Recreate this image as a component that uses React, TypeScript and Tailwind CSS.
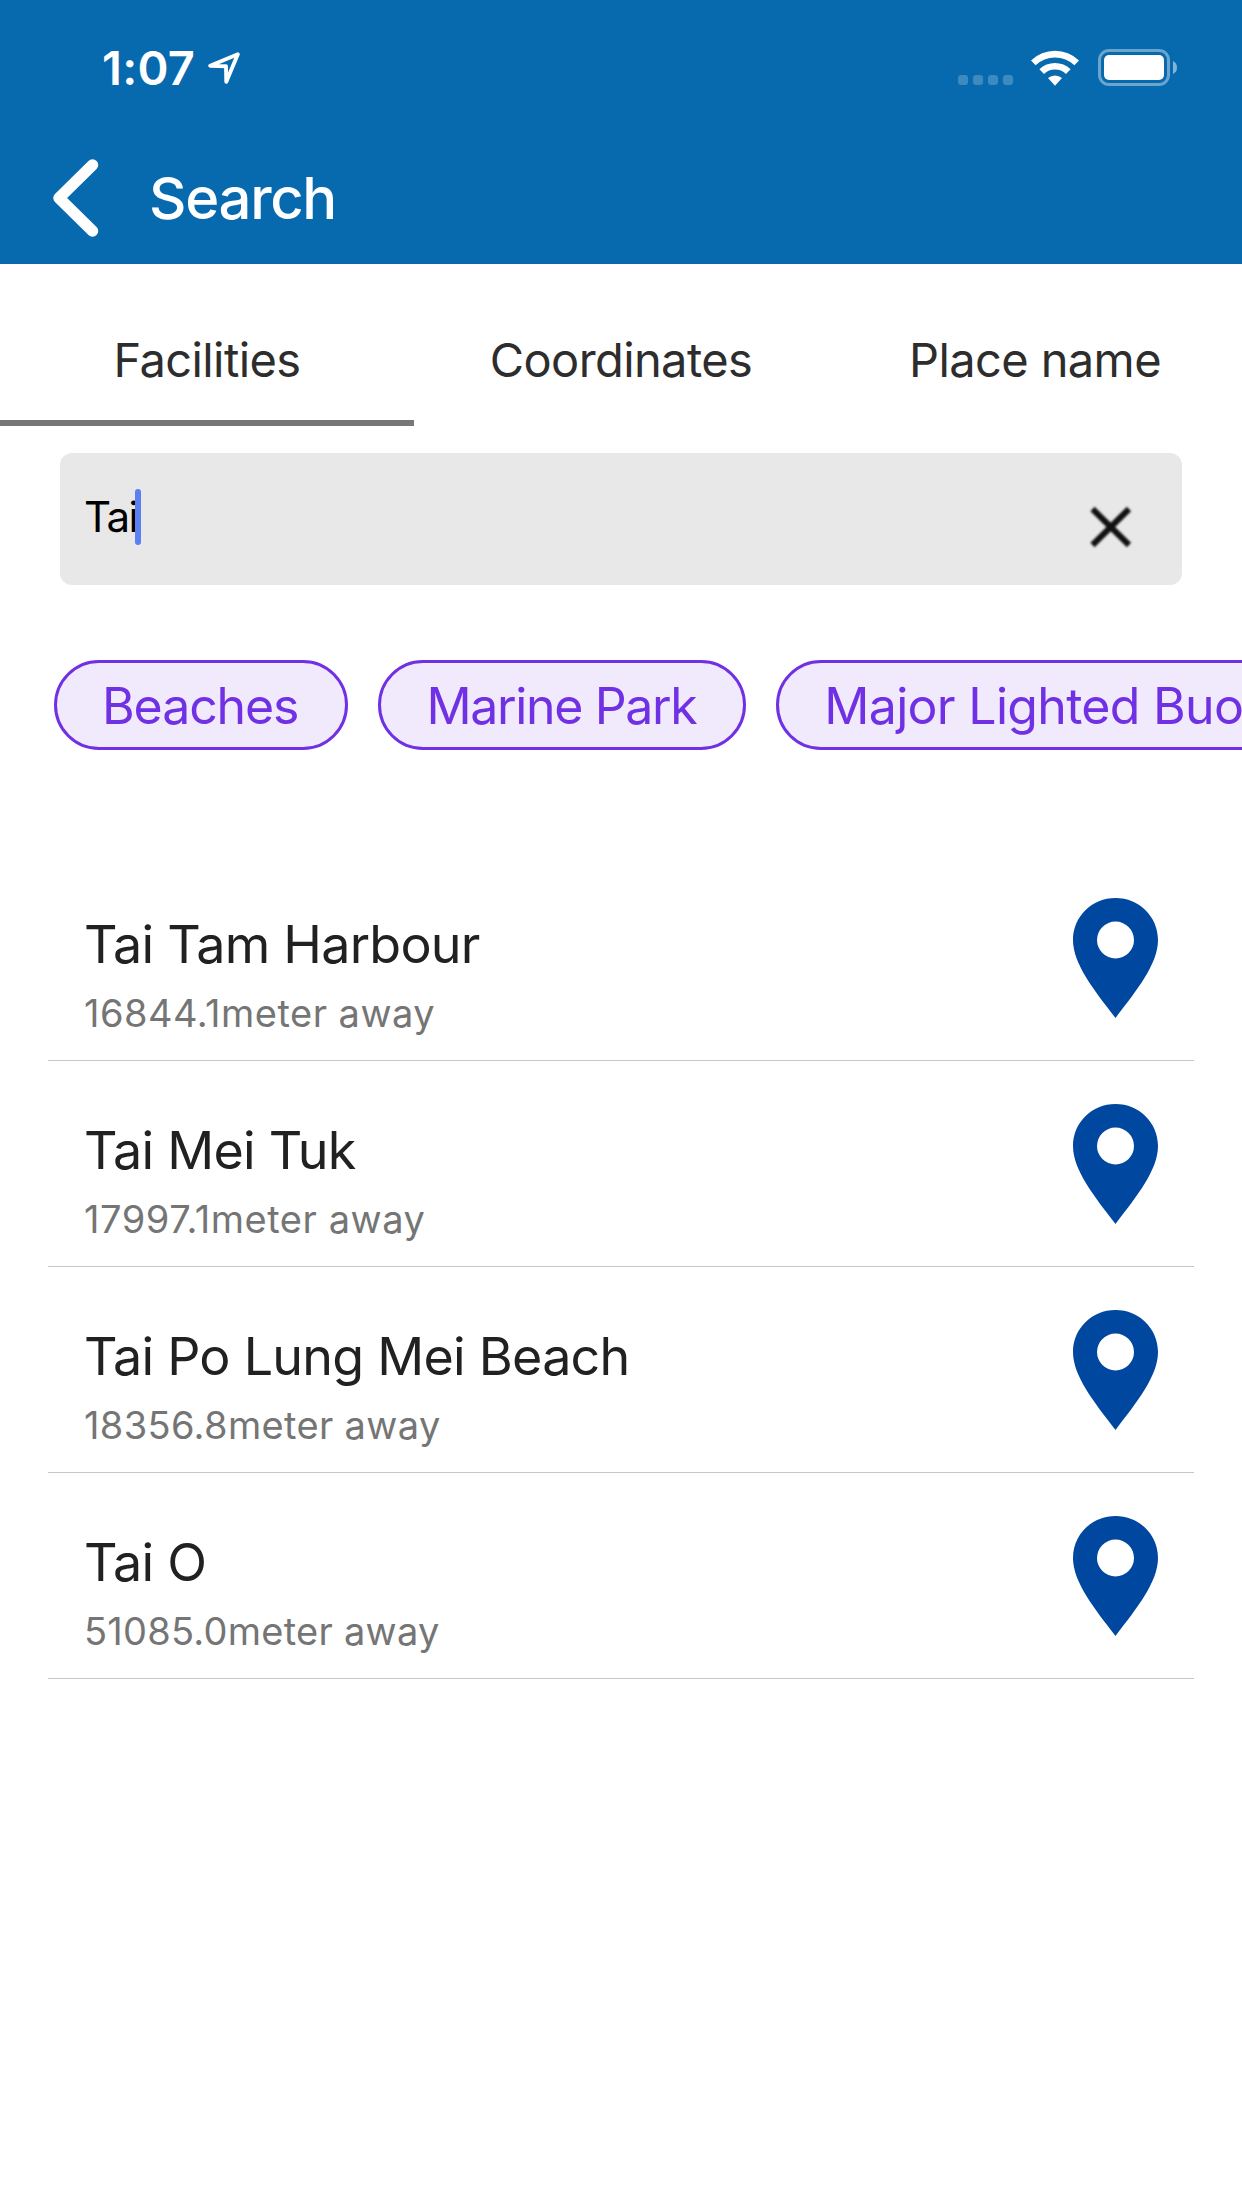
import { useState } from 'react';

const TABS = ['Facilities', 'Coordinates', 'Place name'];

const CATEGORIES = [
  { label: 'Beaches', tracking: 'tracking-[-1.1px]' },
  { label: 'Marine Park', tracking: 'tracking-[-1.35px]' },
  { label: 'Major Lighted Buoys', tracking: 'tracking-[-0.7px]' },
];

const RESULTS = [
  { name: 'Tai Tam Harbour', distance: '16844.1', tracking: 'tracking-[0.5px]' },
  { name: 'Tai Mei Tuk', distance: '17997.1', tracking: 'tracking-[0.55px]' },
  { name: 'Tai Po Lung Mei Beach', distance: '18356.8', tracking: 'tracking-[0.35px]' },
  { name: 'Tai O', distance: '51085.0', tracking: 'tracking-[0.25px]' },
];

function StatusBar() {
  return (
    <div className="h-[135px] flex items-center pl-[102px] pr-[65px] text-white">
      <span className="text-[47px] leading-none font-semibold tracking-[0.3px]">1:07</span>
      <svg className="w-8 h-8 ml-[13px]" viewBox="0 0 32 32" fill="none">
        <path d="M29.8 2.2 2.2 13.8 18 14.3 18.3 29.8Z" stroke="white" strokeWidth="3.9" strokeLinejoin="round" />
      </svg>

      {/* SIGNAL, WIFI, BATTERY */}
      <div className="ml-auto flex items-center">
        <div className="flex gap-[5px] mt-[25px] mr-[18px]">
          {[0, 1, 2, 3].map((dot) => (
            <span key={dot} className="w-2.5 h-2.5 rounded-[3px] bg-white/22" />
          ))}
        </div>
        <svg className="w-12 h-9 mr-[19px]" viewBox="0 0 48 36" fill="white">
          <path d="M0 10.4A34.5 34.5 0 0 1 48 10.4L43.4 15.2A28 28 0 0 0 4.6 15.2Z" />
          <path d="M8.4 19.2A22.6 22.6 0 0 1 39.6 19.2L35 24A16 16 0 0 0 13 24Z" />
          <path d="M17 28.1A10.4 10.4 0 0 1 31 28.1L24 35.8Z" />
        </svg>
        <div className="w-[72px] h-[37px] rounded-[11px] border-3 border-white/40 p-[3px]">
          <div className="w-full h-full rounded-[5px] bg-white" />
        </div>
        <svg className="w-1 h-[13px] ml-[3px]" viewBox="0 0 4 13">
          <path d="M0 0Q4 2 4 6.5T0 13Z" fill="white" fillOpacity="0.5" />
        </svg>
      </div>
    </div>
  );
}

function Pin() {
  return (
    <svg className="w-[85px] h-[120px] mt-[43px] shrink-0" viewBox="0 0 85 120">
      <path
        d="M42.5 0C66 0 85 18.5 85 42C85 66 64 92 42.5 120C21 92 0 66 0 42C0 18.5 19 0 42.5 0ZM42.5 23.5A18.5 18.5 0 1 0 42.5 60.5A18.5 18.5 0 1 0 42.5 23.5Z"
        fill="#00479f"
      />
    </svg>
  );
}

export default function App() {
  const [activeTab, setActiveTab] = useState(0);
  const [query, setQuery] = useState('Tai');

  return (
    <div className="w-[1242px] h-[2208px] overflow-hidden bg-white font-[Inter,sans-serif]">
      {/* HEADER */}
      <header className="bg-[#0769ae]">
        <StatusBar />
        <div className="h-[129px] pb-[3px] pl-[53px] flex items-center text-white">
          <svg className="w-[46px] h-[78px]" viewBox="0 0 46 78" fill="none">
            <path d="M39.5 6 6 39 39.5 72" stroke="white" strokeWidth="11.5" strokeLinecap="round" strokeLinejoin="round" />
          </svg>
          <h1 className="ml-[50px] text-[58px] leading-none font-medium tracking-[-1.3px]">Search</h1>
        </div>
      </header>

      {/* TABS */}
      <nav className="grid grid-cols-3">
        {TABS.map((tab, index) => (
          <button
            key={tab}
            onClick={() => setActiveTab(index)}
            className={`h-[162px] pt-[34px] border-b-6 text-[47px] leading-none tracking-[-0.6px] text-[#2d2d2d] whitespace-nowrap ${
              index === activeTab ? 'border-[#777777]' : 'border-transparent'
            }`}
          >
            {tab}
          </button>
        ))}
      </nav>

      {/* SEARCH FIELD */}
      <div className="mt-[27px] mx-[60px] h-[132px] pb-1 pl-6 pr-[50px] flex items-center rounded-xl bg-[#e8e8e8]">
        <span className="text-[42px] leading-none text-black tracking-[-1.5px]">{query}</span>
        <span className="w-1.5 h-14 -ml-0.5 rounded-full bg-[#5c7ff2]" />
        <button onClick={() => setQuery('')} className="ml-auto mt-5">
          <svg className="w-[42px] h-[42px] blur-[1px]" viewBox="0 0 42 42" fill="none">
            <path d="M2.5 3 39 39M39 3 2.5 39" stroke="#111111" strokeWidth="6" />
          </svg>
        </button>
      </div>

      {/* CATEGORY CHIPS */}
      <div className="mt-[75px] pl-[54px] flex gap-[30px] overflow-hidden">
        {CATEGORIES.map((category) => (
          <button
            key={category.label}
            className={`h-[90px] pl-[45px] pr-[47px] pt-0.5 shrink-0 rounded-full border-3 border-[#7030e4] bg-[#f1e9fc] text-[50px] leading-none text-[#7030e4] whitespace-nowrap ${category.tracking}`}
          >
            {category.label}
          </button>
        ))}
      </div>

      {/* RESULTS */}
      <ul className="mt-[105px] mx-12">
        {RESULTS.map((result) => (
          <li key={result.name} className="h-[206px] pl-9 pr-9 flex justify-between border-b border-[#c6c6c6]">
            <div className="pt-[58px]">
              <p className="text-[52px] leading-[64px] tracking-[-0.75px] text-[#212121]">{result.name}</p>
              <p className={`mt-3 text-[38px] leading-[48px] text-[#757575] ${result.tracking}`}>{result.distance}meter away</p>
            </div>
            <Pin />
          </li>
        ))}
      </ul>
    </div>
  );
}
